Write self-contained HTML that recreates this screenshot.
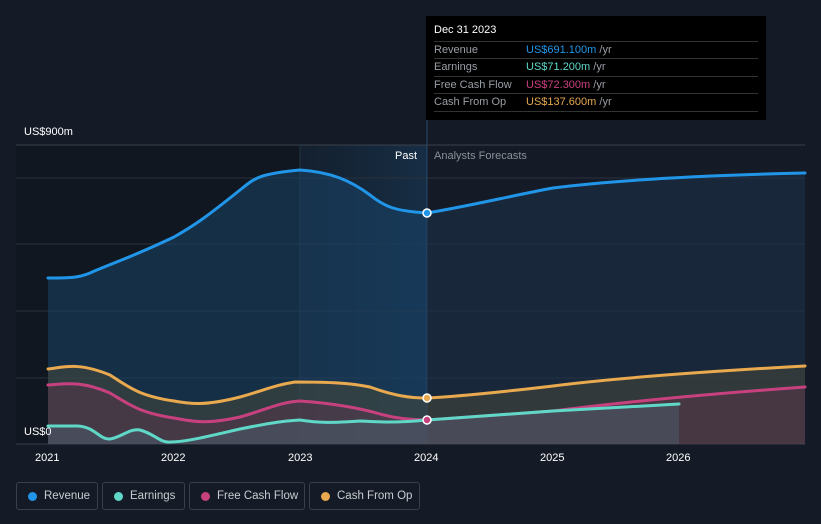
<!DOCTYPE html><html><head><style>
body{margin:0;width:821px;height:524px;background:#151b26;font-family:"Liberation Sans",sans-serif;overflow:hidden;position:relative}
.t{position:absolute;font-size:11px;color:#fff}
.leg{position:absolute;top:482px;height:28px;border:1px solid #3a404b;border-radius:3px;box-sizing:border-box;font-size:11.5px;color:#c9ccd2;line-height:26px;padding-left:27px}
.leg i{position:absolute;left:11px;top:9px;width:9px;height:9px;border-radius:50%}
.tip{position:absolute;left:426px;top:16px;width:340px;height:104px;background:#000;font-size:11px}
.tip .r{position:absolute;left:8px;width:324px;border-top:1px solid #333;height:17px;line-height:17px;color:#9a9ea6}
.tip .r b{font-weight:normal;position:absolute;left:92px}
</style></head><body>
<svg width="821" height="524" style="position:absolute;left:0;top:0">
<defs><linearGradient id="hl" x1="0" x2="1"><stop offset="0" stop-color="#1a3550" stop-opacity=".3"/><stop offset="1" stop-color="#1a3d5e" stop-opacity=".6"/></linearGradient>
<clipPath id="past"><rect x="0" y="0" width="427" height="524"/></clipPath>
<clipPath id="fut"><rect x="427" y="0" width="400" height="524"/></clipPath></defs>
<rect x="16" y="145" width="411" height="299" fill="#111720"/>
<rect x="300" y="145" width="127" height="299" fill="url(#hl)"/>
<g stroke="#2a313c" stroke-width="1">
<line x1="16" y1="145" x2="805" y2="145" stroke="#3a414c"/><line x1="16" y1="178" x2="805" y2="178"/><line x1="16" y1="244" x2="805" y2="244"/><line x1="16" y1="311" x2="805" y2="311"/><line x1="16" y1="378" x2="805" y2="378"/><line x1="16" y1="444" x2="805" y2="444" stroke="#3a414c"/></g>
<line x1="427" y1="16" x2="427" y2="444" stroke="#2a4a6a"/>
<line x1="300" y1="145" x2="300" y2="444" stroke="#1f3448"/>
<g id="rev"><path d="M48,278 C70,278 78,278 90,273 C110,264 130,258 174,237 C195,225 205,218 240,190 C255,178 258,174 300,170 C330,172 350,180 370,195 C385,207 395,211 427,213 C470,206 510,196 553,188 C600,182 679,176 805,173 L805,444 L48,444Z" fill="#1a4468" fill-opacity=".55" clip-path="url(#past)"/>
<path d="M48,278 C70,278 78,278 90,273 C110,264 130,258 174,237 C195,225 205,218 240,190 C255,178 258,174 300,170 C330,172 350,180 370,195 C385,207 395,211 427,213 C470,206 510,196 553,188 C600,182 679,176 805,173 L805,444 L48,444Z" fill="#1d3048" fill-opacity=".6" clip-path="url(#fut)"/></g>
<path d="M48,369 C65,367 78,362 110,375 C130,388 140,396 174,401 C190,404 205,406 240,397 C265,390 275,385 295,382 C330,382 350,383 370,387 C395,396 410,398 427,398 C470,396 553,386 553,386 C600,380 679,373 805,366 L805,444 L48,444Z" fill="#4a4b3a" fill-opacity=".5"/>
<path d="M48,385 C65,384 80,380 110,393 C130,405 140,413 174,418 C190,421 205,425 240,417 C265,410 280,402 300,401 C330,403 360,408 380,414 C395,418 410,420 427,420 L553,411 C600,405 679,396 805,387 L805,444 L48,444Z" fill="#6a3550" fill-opacity=".4"/>
<path d="M48,426 L78,426 C95,427 100,440 110,439 C120,438 130,428 140,430 C155,434 160,443 170,442 C185,442 205,437 240,429 C260,425 280,421 300,420 C320,423 330,423 360,421 C380,422 395,423 427,420 L553,411 L679,404 L679,444 L48,444Z" fill="#4a6a78" fill-opacity=".4"/>
<g fill="none" stroke-width="3" stroke-linecap="round">
<path d="M48,278 C70,278 78,278 90,273 C110,264 130,258 174,237 C195,225 205,218 240,190 C255,178 258,174 300,170 C330,172 350,180 370,195 C385,207 395,211 427,213 C470,206 510,196 553,188 C600,182 679,176 805,173" stroke="#2196e8"/>
<path d="M48,369 C65,367 78,362 110,375 C130,388 140,396 174,401 C190,404 205,406 240,397 C265,390 275,385 295,382 C330,382 350,383 370,387 C395,396 410,398 427,398 C470,396 553,386 553,386 C600,380 679,373 805,366" stroke="#e8a94f"/>
<path d="M48,385 C65,384 80,380 110,393 C130,405 140,413 174,418 C190,421 205,425 240,417 C265,410 280,402 300,401 C330,403 360,408 380,414 C395,418 410,420 427,420 L553,411 C600,405 679,396 805,387" stroke="#c8417f"/>
<path d="M48,426 L78,426 C95,427 100,440 110,439 C120,438 130,428 140,430 C155,434 160,443 170,442 C185,442 205,437 240,429 C260,425 280,421 300,420 C320,423 330,423 360,421 C380,422 395,423 427,420 L553,411 L679,404" stroke="#5fd8c8"/>
</g>
<g stroke="#fff" stroke-width="1.5"><circle cx="427" cy="213" r="4" fill="#2196e8"/><circle cx="427" cy="398" r="4" fill="#e8a94f"/><circle cx="427" cy="420" r="4" fill="#c8417f"/></g>
</svg>
<div class="t" style="left:24px;top:126px">US$900m</div>
<div class="t" style="left:24px;top:426px">US$0</div>
<div class="t" style="left:395px;top:150px">Past</div>
<div class="t" style="left:434px;top:150px;color:#8a8f98">Analysts Forecasts</div>
<div class="t" style="left:35px;top:452px">2021</div>
<div class="t" style="left:161px;top:452px">2022</div>
<div class="t" style="left:288px;top:452px">2023</div>
<div class="t" style="left:414px;top:452px">2024</div>
<div class="t" style="left:540px;top:452px">2025</div>
<div class="t" style="left:666px;top:452px">2026</div>
<div class="tip">
<div style="position:absolute;left:8px;top:8px;color:#fff;font-size:11px">Dec 31 2023</div>
<div class="r" style="top:25px">Revenue<b><span style="color:#2196e8">US$691.100m</span> /yr</b></div>
<div class="r" style="top:42px">Earnings<b><span style="color:#5fd8c8">US$71.200m</span> /yr</b></div>
<div class="r" style="top:60px">Free Cash Flow<b><span style="color:#c8417f">US$72.300m</span> /yr</b></div>
<div class="r" style="top:77px;border-bottom:1px solid #333">Cash From Op<b><span style="color:#e8a94f">US$137.600m</span> /yr</b></div>
</div>
<div class="leg" style="left:16px;width:82px"><i style="background:#2196e8"></i>Revenue</div>
<div class="leg" style="left:102px;width:83px"><i style="background:#5fd8c8"></i>Earnings</div>
<div class="leg" style="left:189px;width:116px"><i style="background:#c8417f"></i>Free Cash Flow</div>
<div class="leg" style="left:309px;width:111px"><i style="background:#e8a94f"></i>Cash From Op</div>
</body></html>
